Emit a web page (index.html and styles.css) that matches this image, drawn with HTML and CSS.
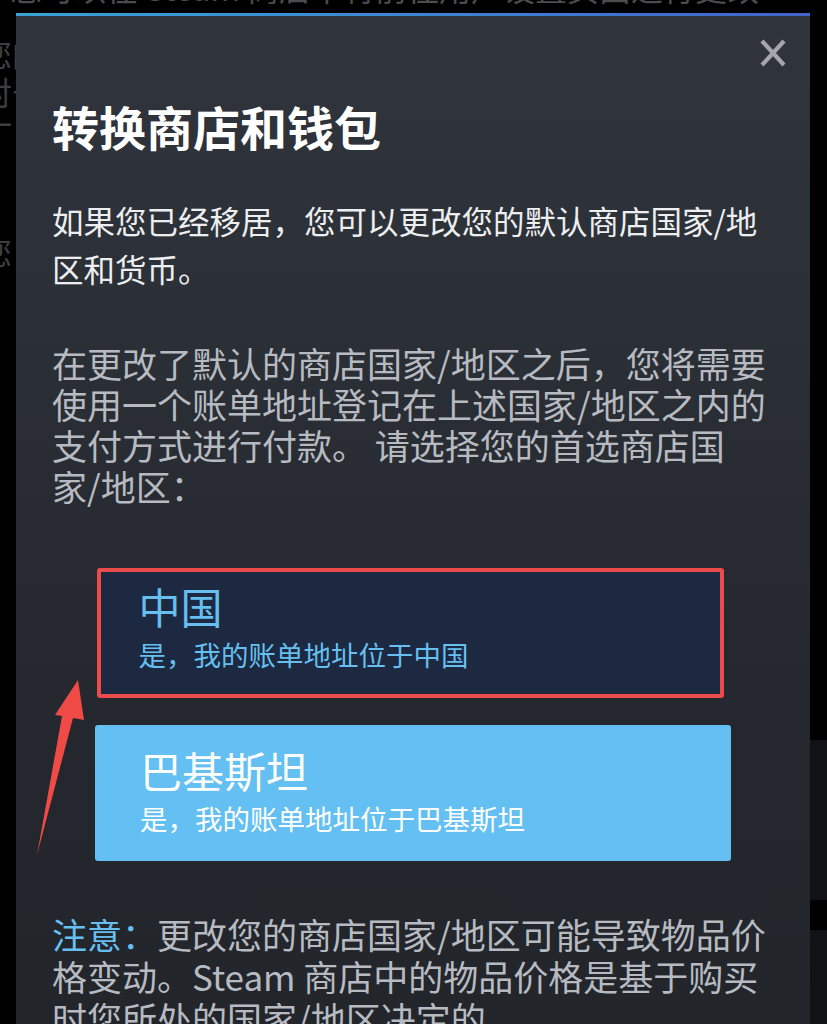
FILE: index.html
```html
<!DOCTYPE html>
<html lang="zh-CN">
<head>
<meta charset="utf-8">
<title>转换商店和钱包</title>
<link rel="stylesheet" href="styles.css">
</head>
<body>
<div class="backdrop">
  <p class="bg-top">您可以在 Steam 商店中将前往用户设置页面进行更改</p>
  <p class="bg-line l1">您的</p>
  <p class="bg-line l2">对于</p>
  <p class="bg-line l3">一</p>
  <p class="bg-line l4">您</p>
  <div class="bg-card c1"></div>
  <div class="bg-card c2"></div>
</div>

<div class="modal">
  <div class="modal-bar"></div>
  <button class="close" aria-label="关闭">
    <svg viewBox="0 0 30 30" width="30" height="30"><path d="M4 3 L26 27 M26 3 L4 27" stroke="#a3a6ab" stroke-width="4.2" stroke-linecap="butt" fill="none"/></svg>
  </button>
  <div class="modal-body">
    <h1 class="title">转换商店和钱包</h1>
    <p class="intro">如果您已经移居，您可以更改您的默认商店国家/地<br>区和货币。</p>
    <p class="desc">在更改了默认的商店国家/地区之后，您将需要<br>使用一个账单地址登记在上述国家/地区之内的<br>支付方式进行付款。 请选择您的首选商店国<br>家/地区：</p>
    <div class="choices">
      <div class="choice current">
        <div class="choice-name">中国</div>
        <div class="choice-sub">是，我的账单地址位于中国</div>
      </div>
      <div class="choice alt">
        <div class="choice-name">巴基斯坦</div>
        <div class="choice-sub">是，我的账单地址位于巴基斯坦</div>
      </div>
    </div>
    <p class="note"><span class="note-label">注意：</span>更改您的商店国家/地区可能导致物品价<br>格变动。Steam 商店中的物品价格是基于购买<br>时您所处的国家/地区决定的。</p>
  </div>
</div>

<svg class="arrow" viewBox="0 0 100 200" width="100" height="200">
  <polygon points="48,10 54,50 43,48 7,185 32,46 25,45" fill="#f04a46"/>
</svg>
</body>
</html>
```

FILE: styles.css
```css
html, body {
  margin: 0;
  padding: 0;
}
body {
  width: 827px;
  height: 1024px;
  overflow: hidden;
  background: #000;
  position: relative;
  font-family: "Noto Sans CJK SC", "Noto Sans", sans-serif;
}

.backdrop {
  position: relative;
  width: 827px;
  height: 1024px;
  font-size: 32px;
}
.backdrop p { margin: 0; }
.bg-top {
  position: absolute;
  top: -36px;
  left: 10px;
  white-space: nowrap;
  color: #4a4c50;
}
.bg-line {
  position: absolute;
  left: -20px;
  color: #3c3e42;
}
.l1 { top: 30px; }
.l2 { top: 68px; }
.l3 { top: 100px; }
.l4 { top: 228px; }
.bg-card {
  position: absolute;
  left: 790px;
  width: 60px;
  border-radius: 6px;
  background: #101215;
}
.c1 { top: 740px; height: 160px; }
.c2 { top: 930px; height: 120px; }

.modal {
  position: absolute;
  left: 16px;
  top: 13px;
  width: 794px;
  height: 1030px;
  background: linear-gradient(180deg, #30343c 0%, #2a2e35 35%, #24272d 70%, #22252a 100%);
}
.modal-bar {
  height: 3px;
  background: linear-gradient(90deg, #37a3d6 0%, #3c86d2 50%, #4262cc 100%);
}
.close {
  position: absolute;
  top: 25px;
  right: 22px;
  width: 30px;
  height: 30px;
  padding: 0;
  border: 0;
  background: none;
  display: block;
}
.close svg { display: block; }

.modal-body {
  padding: 82px 36px 0 36px;
}
.title {
  margin: 0;
  font-size: 47px;
  line-height: 56px;
  font-weight: 700;
  color: #ffffff;
}
.intro {
  margin: 42px 0 0 0;
  font-size: 31.5px;
  line-height: 48px;
  color: #eceef0;
  white-space: nowrap;
}
.desc {
  margin: 50px 0 0 0;
  font-size: 35px;
  line-height: 41px;
  color: #b7bbc1;
  white-space: nowrap;
}

.choices {
  margin: 62px 0 0 0;
  display: flex;
  flex-direction: column;
  align-items: center;
  gap: 27px;
}
.choice {
  box-sizing: border-box;
  border-radius: 3px;
  display: flex;
  flex-direction: column;
}
.choice.current {
  width: 627px;
  height: 130px;
  margin-left: -6px;
  border: 4px solid #ec4b4b;
  background: #1c2941;
  color: #66bfee;
  padding: 8px 0 0 38px;
}
.choice.alt {
  width: 636px;
  height: 136px;
  background: #64bff2;
  color: #ffffff;
  padding: 19px 0 0 45px;
}
.choice-name {
  font-size: 42px;
  line-height: 52px;
}
.choice-sub {
  margin-top: 4px;
  font-size: 27.5px;
  line-height: 36px;
}

.note {
  margin: 52px 0 0 0;
  font-size: 35px;
  line-height: 42px;
  color: #b7bbc1;
  white-space: nowrap;
}
.note-label { color: #66bff0; }

.arrow {
  position: absolute;
  left: 30px;
  top: 670px;
}
```
